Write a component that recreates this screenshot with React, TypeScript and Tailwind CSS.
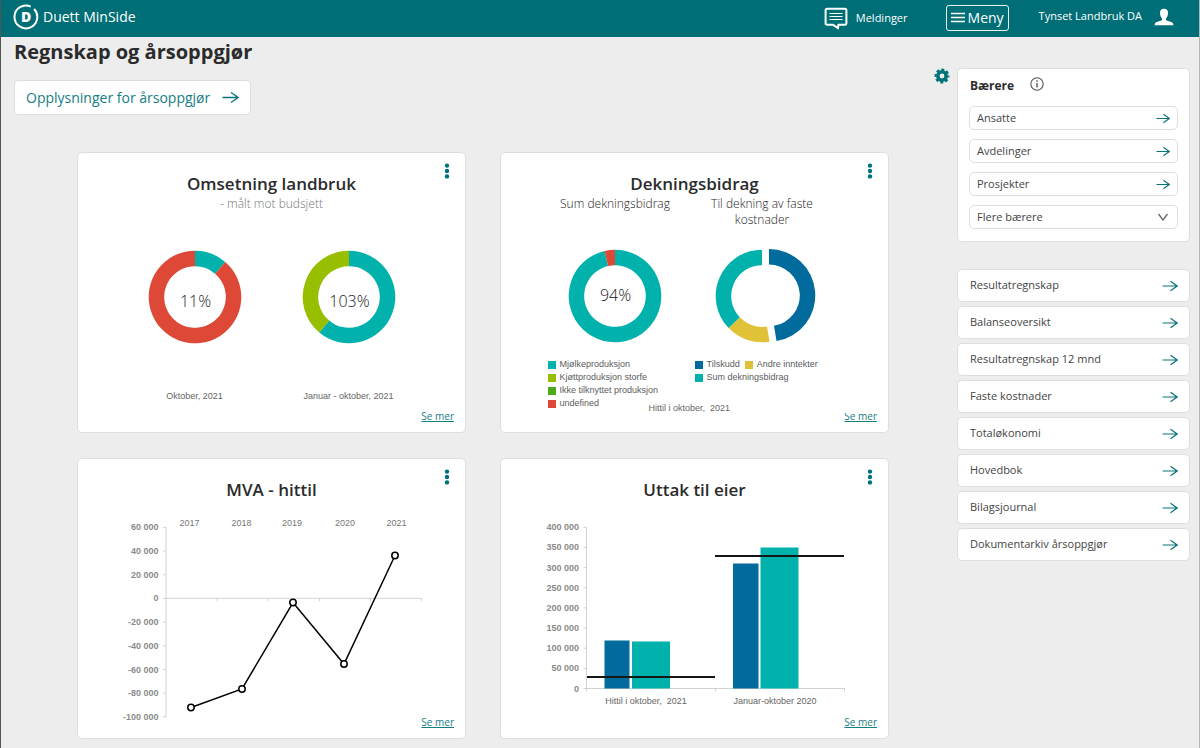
import type { ReactNode } from "react";

const TEAL = "#00b2ab";
const BLUE = "#006b9c";
const RED = "#dd4837";
const LIME = "#97bf00";
const GREEN = "#4aab16";
const YELLOW = "#dfc238";

function Arrow({ className }: { className: string }) {
  return (
    <svg viewBox="0 0 16 12" className={className} fill="none" stroke="#0b747b" strokeWidth="1.2" aria-hidden="true">
      <path d="M0.5 6H15M8.5 1.2L15.2 6L8.5 10.8" />
    </svg>
  );
}

function Logo() {
  return (
    <svg viewBox="0 0 26 26" className="size-[26px]" aria-hidden="true">
      <path d="M20.4 4.3A11.4 11.4 0 1 0 23 7.6" fill="none" stroke="#fff" strokeWidth="2" transform="rotate(-16 13 13)" />
      <text x="13.2" y="18" textAnchor="middle" fontSize="14" fontWeight="800" fill="#fff">
        D
      </text>
    </svg>
  );
}

function Header() {
  return (
    <header className="flex h-[37px] items-start bg-[#006e76] pl-3 pr-[25px] text-white">
      <a href="#hjem" className="flex items-center gap-1 pt-1 text-[14px] leading-6">
        <Logo />
        Duett MinSide
      </a>
      <a href="#meldinger" className="ml-auto flex items-center gap-2 pt-[7px] text-[11px]">
        <svg viewBox="0 0 24 23" className="h-[23px] w-6" fill="none" stroke="#fff" aria-hidden="true">
          <path d="M3 1.7H21A1.4 1.4 0 0 1 22.4 3.1V16.4A1.4 1.4 0 0 1 21 17.8H14.4L14 21L9 17.8H3A1.4 1.4 0 0 1 1.6 16.4V3.1A1.4 1.4 0 0 1 3 1.7Z" strokeWidth="2" />
          <path d="M5.5 6.5H18.5M5.5 9.5H18.5M5.5 12.5H18.5" strokeWidth="1" />
        </svg>
        Meldinger
      </a>
      <button type="button" className="ml-[38px] mt-[5px] flex h-[26px] items-center gap-[3px] rounded-[3px] border border-white/90 px-1 pb-0.5 text-[14px]">
        <svg viewBox="0 0 14 12" className="h-3 w-[14px]" stroke="#fff" strokeWidth="1.3" aria-hidden="true">
          <path d="M0 2.5H14M0 6.5H14M0 10.5H14" />
        </svg>
        Meny
      </button>
      <a href="#bruker" className="ml-[30px] flex items-start gap-3 pt-2 text-[11px] leading-4">
        Tynset Landbruk DA
        <svg viewBox="0 0 20 18" className="h-[18px] w-5" fill="#fff" aria-hidden="true">
          <path d="M10 0.8C12.9 0.8 14.2 2.8 14 5.6C13.9 8 12.9 9.4 12 10.4V11.9C12.4 12.9 18.4 13.4 19 15.4L19.5 17.3H0.5L1 15.4C1.6 13.4 7.6 12.9 8 11.9V10.4C7.1 9.4 6.1 8 6 5.6C5.8 2.8 7.1 0.8 10 0.8Z" />
        </svg>
      </a>
    </header>
  );
}

type CardProps = { title: string; clippedLink?: boolean; children: ReactNode };

function Card({ title, clippedLink, children }: CardProps) {
  return (
    <article className="relative flex min-h-[281px] min-w-0 flex-col rounded-[5px] border border-[#dfdfdf] bg-white pb-2 pt-[19px]">
      <h2 className="text-center text-[17px] font-semibold leading-6 text-[#2b2b2b]">{title}</h2>
      <button type="button" aria-label={`Valg for ${title}`} className="absolute right-[14px] top-[9px] flex h-[18px] w-2 items-center justify-center">
        <svg viewBox="0 0 6 16" className="h-4 w-[6px]" fill="#00727a">
          <circle cx="3" cy="2.6" r="2.2" />
          <circle cx="3" cy="8" r="2.2" />
          <circle cx="3" cy="13.4" r="2.2" />
        </svg>
      </button>
      {children}
      <div className="mt-auto flex justify-end pr-[11px]">
        <a href="#detaljer" className={`text-[10px] leading-4 text-[#157d85] underline ${clippedLink ? "[clip-path:inset(5px_0_0_0)]" : ""}`}>
          Se mer
        </a>
      </div>
    </article>
  );
}

type Slice = { from: number; to: number; color: string; dx?: number; dy?: number };

function ringPath(from: number, to: number) {
  const point = (share: number, r: number) => {
    const a = share * 2 * Math.PI;
    return `${(47 + r * Math.sin(a)).toFixed(2)} ${(47 - r * Math.cos(a)).toFixed(2)}`;
  };
  const large = to - from > 0.5 ? 1 : 0;
  return `M${point(from, 46.3)}A46.3 46.3 0 ${large} 1 ${point(to, 46.3)}L${point(to, 30.8)}A30.8 30.8 0 ${large} 0 ${point(from, 30.8)}Z`;
}

function Donut({ slices, label, labelY = 52 }: { slices: Slice[]; label?: string; labelY?: number }) {
  return (
    <svg viewBox="0 0 94 94" className="mx-auto size-[94px] overflow-visible" role="img" aria-label={label ?? "Fordeling"}>
      {slices.map((s) => (
        <path key={s.from} d={ringPath(s.from, s.to)} fill={s.color} transform={`translate(${s.dx ?? 0} ${s.dy ?? 0})`} />
      ))}
      {label && (
        <text x="47.5" y={labelY} textAnchor="middle" fontSize="16" fontWeight="300" fill="#222">
          {label}
        </text>
      )}
    </svg>
  );
}

function Legend({ items }: { items: [string, string][] }) {
  return (
    <ul className="-mb-0.5 mt-[15px] flex flex-wrap gap-x-[5px] pl-[6px] font-['Liberation_Sans',Arial,sans-serif] text-[9px] leading-[13px] text-[#5c5c5c]">
      {items.map(([color, name]) => (
        <li key={name} className="flex items-center gap-1 whitespace-nowrap">
          <svg viewBox="0 0 8 8" className="size-2" aria-hidden="true">
            <rect width="8" height="8" fill={color} />
          </svg>
          {name}
        </li>
      ))}
    </ul>
  );
}

const captionClass = "text-center font-['Liberation_Sans',Arial,sans-serif] text-[9px] leading-3 text-[#666]";

function TurnoverCard() {
  return (
    <Card title="Omsetning landbruk">
      <p className="text-center text-[12px] font-light leading-4 text-[#777]">- målt mot budsjett</p>
      <div className="mt-[38px] flex justify-center">
        <figure className="w-[154px]">
          <Donut
            label="11%"
            labelY={57}
            slices={[
              { from: 0, to: 0.113, color: TEAL },
              { from: 0.113, to: 1, color: RED },
            ]}
          />
          <figcaption className={`mt-[46px] ${captionClass}`}>Oktober, 2021</figcaption>
        </figure>
        <figure className="w-[154px]">
          <Donut
            label="103%"
            labelY={57}
            slices={[
              { from: 0, to: 0.611, color: TEAL },
              { from: 0.611, to: 1, color: LIME },
            ]}
          />
          <figcaption className={`mt-[46px] ${captionClass}`}>Januar - oktober, 2021</figcaption>
        </figure>
      </div>
    </Card>
  );
}

function ContributionCard() {
  return (
    <Card title="Dekningsbidrag" clippedLink>
      <div className="flex justify-center pr-3 text-[#1c1c1c]">
        <section className="w-[147px]">
          <h3 className="h-8 text-center text-[12px] font-light leading-4">Sum dekningsbidrag</h3>
          <div className="mt-[21px] flex">
            <Donut
              label="94%"
              slices={[
                { from: 0, to: 0.964, color: TEAL },
                { from: 0.964, to: 1, color: RED },
              ]}
            />
          </div>
          <Legend
            items={[
              [TEAL, "Mjølkeproduksjon"],
              [LIME, "Kjøttproduksjon storfe"],
              [GREEN, "Ikke tilknyttet produksjon"],
              [RED, "undefined"],
            ]}
          />
        </section>
        <section className="w-[147px]">
          <h3 className="h-8 px-4 text-center text-[12px] font-light leading-4">Til dekning av faste kostnader</h3>
          <div className="mt-[21px] flex">
            <Donut
              slices={[
                { from: 0, to: 0.474, color: BLUE, dx: 7, dy: -0.6 },
                { from: 0.474, to: 0.628, color: YELLOW },
                { from: 0.628, to: 1, color: TEAL },
              ]}
            />
          </div>
          <Legend
            items={[
              [BLUE, "Tilskudd"],
              [YELLOW, "Andre inntekter"],
              [TEAL, "Sum dekningsbidrag"],
            ]}
          />
        </section>
      </div>
      <p className={`absolute bottom-[18px] left-1/2 -translate-x-[46px] whitespace-pre ${captionClass}`}>{"Hittil i oktober,  2021"}</p>
    </Card>
  );
}

const chartClass = "h-[212px] w-full overflow-visible font-['Liberation_Sans',Arial,sans-serif] text-[9px]";

const vatPoints = [
  { year: "2017", x: 113, y: 205.5, labelX: 111.5 },
  { year: "2018", x: 164, y: 187, labelX: 163.5 },
  { year: "2019", x: 215, y: 100.5, labelX: 214 },
  { year: "2020", x: 266, y: 162, labelX: 267 },
  { year: "2021", x: 317, y: 53.5, labelX: 318.5 },
];

const vatTicks = ["60 000", "40 000", "20 000", "0", "-20 000", "-40 000", "-60 000", "-80 000", "-100 000"];

function VatCard() {
  return (
    <Card title="MVA - hittil">
      <svg viewBox="0 0 387 212" className={chartClass} role="img" aria-label="MVA per år">
        <path d="M88 25V215M88 96.3H343.5M139 96V99M190 96V99M241.5 96V99M292.5 96V99M343.5 96V99" fill="none" stroke="#d2d2d2" />
        {vatTicks.map((label, i) => (
          <g key={label}>
            <path d={`M85 ${25.3 + i * 23.7}H88`} stroke="#d2d2d2" />
            <text x="80.5" y={28.3 + i * 23.7} textAnchor="end" fontWeight="700" fill="#8b8b8b">
              {label}
            </text>
          </g>
        ))}
        <polyline points={vatPoints.map((p) => `${p.x},${p.y}`).join(" ")} fill="none" stroke="#000" strokeWidth="1.5" />
        {vatPoints.map((p) => (
          <g key={p.year}>
            <circle cx={p.x} cy={p.y} r="3.2" fill="#fff" stroke="#000" strokeWidth="1.5" />
            <text x={p.labelX} y="24" textAnchor="middle" fill="#777">
              {p.year}
            </text>
          </g>
        ))}
      </svg>
    </Card>
  );
}

const drawTicks = ["400 000", "350 000", "300 000", "250 000", "200 000", "150 000", "100 000", "50 000", "0"];

function OwnerDrawCard() {
  return (
    <Card title="Uttak til eier">
      <svg viewBox="0 0 387 212" className={chartClass} role="img" aria-label="Uttak til eier">
        <path d="M85.5 25V186.5H343.5M85.5 186V189.5M214.5 186V189.5M343.5 186V189.5" fill="none" stroke="#d2d2d2" />
        {drawTicks.map((label, i) => (
          <g key={label}>
            <path d={`M82.5 ${25.3 + i * 20.15}H85.5`} stroke="#d2d2d2" />
            <text x="78" y={28.3 + i * 20.15} textAnchor="end" fontWeight="700" fill="#8b8b8b">
              {label}
            </text>
          </g>
        ))}
        <rect x="103.5" y="138.5" width="25" height="48" fill={BLUE} />
        <rect x="131" y="139.5" width="38" height="47" fill={TEAL} />
        <rect x="232" y="61.5" width="25.5" height="125" fill={BLUE} />
        <rect x="259.5" y="45.5" width="38" height="141" fill={TEAL} />
        <path d="M86 175H214M214 54H343" stroke="#151515" strokeWidth="1.8" />
        <text x="145" y="202" textAnchor="middle" fill="#666" className="whitespace-pre">
          {"Hittil i oktober,  2021"}
        </text>
        <text x="274" y="202" textAnchor="middle" fill="#666">
          Januar-oktober 2020
        </text>
      </svg>
    </Card>
  );
}

const reports = [
  "Resultatregnskap",
  "Balanseoversikt",
  "Resultatregnskap 12 mnd",
  "Faste kostnader",
  "Totaløkonomi",
  "Hovedbok",
  "Bilagsjournal",
  "Dokumentarkiv årsoppgjør",
];

function Sidebar() {
  return (
    <aside className="w-[233px] shrink-0 pt-[31px] text-[11px] text-[#444]">
      <section className="rounded-[5px] border border-[#dfdfdf] bg-white px-[11px] pb-3 pt-[7px]">
        <div className="flex h-5 items-center gap-4 pl-px">
          <h2 className="text-[12px] font-bold leading-5 text-[#2b2b2b]">Bærere</h2>
          <button type="button" aria-label="Informasjon" className="pb-1">
            <svg viewBox="0 0 14 14" className="size-[14px]" fill="none" stroke="#555" aria-hidden="true">
              <circle cx="7" cy="7" r="6.2" strokeWidth="1.1" />
              <path d="M7 6V10.6M7 3.2V4.8" strokeWidth="1.4" />
            </svg>
          </button>
        </div>
        <nav aria-label="Bærere" className="mt-[10px] flex flex-col gap-[9px]">
          {["Ansatte", "Avdelinger", "Prosjekter"].map((name) => (
            <a key={name} href="#baerere" className="flex h-6 items-center justify-between rounded-[5px] border border-[#dfdfdf] px-[7px]">
              {name}
              <Arrow className="h-[11px] w-[14px]" />
            </a>
          ))}
          <div className="grid h-6 items-center rounded-[5px] border border-[#dfdfdf]">
            <select aria-label="Flere bærere" className="col-start-1 row-start-1 h-full w-full appearance-none bg-transparent pl-[7px]">
              <option>Flere bærere</option>
            </select>
            <svg viewBox="0 0 12 8" className="pointer-events-none col-start-1 row-start-1 mr-2 h-2 w-3 justify-self-end" fill="none" stroke="#666" strokeWidth="1.3" aria-hidden="true">
              <path d="M1.5 1L6 7L10.5 1" />
            </svg>
          </div>
        </nav>
      </section>
      <nav aria-label="Rapporter" className="mt-[27px] flex flex-col gap-1">
        {reports.map((name) => (
          <a key={name} href="#rapport" className="flex h-[33px] items-center justify-between rounded-[5px] border border-[#dfdfdf] bg-white pl-3 pr-[11px]">
            {name}
            <Arrow className="h-3 w-4" />
          </a>
        ))}
      </nav>
    </aside>
  );
}

export default function App() {
  return (
    <div className="min-h-screen border-l border-r border-l-[#555] border-r-[#b5b5b5] bg-[#ededed] font-['Open_Sans','Noto_Sans',sans-serif]">
      <Header />
      <main className="flex items-start pb-2 pl-[13px] pr-[9px]">
        <div className="min-w-0 flex-1">
          <h1 className="text-[20px] font-bold leading-[30px] text-[#2b2b2b]">Regnskap og årsoppgjør</h1>
          <div className="mt-[13px] flex">
            <a href="#arsoppgjor" className="flex h-[35px] items-center gap-3 rounded border border-[#dfdfdf] bg-white px-[11px] text-[14px] text-[#157d85]">
              Opplysninger for årsoppgjør
              <Arrow className="h-[13px] w-[17px]" />
            </a>
          </div>
          <div className="ml-[63px] mt-[37px] grid grid-cols-2 gap-x-[34px] gap-y-[25px]">
            <TurnoverCard />
            <ContributionCard />
            <VatCard />
            <OwnerDrawCard />
          </div>
        </div>
        <button type="button" aria-label="Innstillinger" className="ml-[45px] mr-[7px] mt-[31px] shrink-0">
          <svg viewBox="0 0 16 16" className="size-4" fill="none" stroke="#00727a" aria-hidden="true">
            <circle cx="8" cy="8" r="4.2" strokeWidth="3.6" />
            <circle cx="8" cy="8" r="6.4" strokeWidth="2.2" strokeDasharray="2.9 2.127" strokeDashoffset="1.45" />
          </svg>
        </button>
        <Sidebar />
      </main>
    </div>
  );
}
